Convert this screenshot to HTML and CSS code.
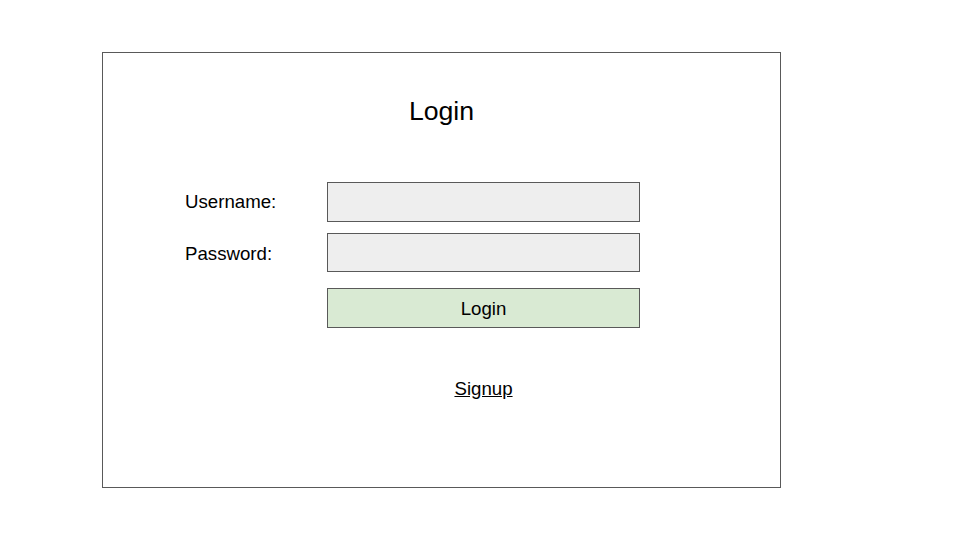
FILE: index.html
```html
<!DOCTYPE html>
<html>
<head>
<meta charset="utf-8">
<link rel="stylesheet" href="styles.css">
</head>
<body>
<div class="card">
  <h1 class="title">Login</h1>
  <form class="form">
    <label class="label" for="u">Username:</label>
    <div class="field" id="u"></div>
    <label class="label label-pw" for="p">Password:</label>
    <div class="field" id="p"></div>
    <div class="spacer"></div>
    <div class="button">Login</div>
    <div class="spacer"></div>
    <div class="signup-wrap"><a class="signup" href="#">Signup</a></div>
  </form>
</div>
</body>
</html>
```
FILE: styles.css
```css
html, body {
  margin: 0;
  padding: 0;
  background: #ffffff;
}
body {
  font-family: "Liberation Sans", Arial, sans-serif;
  color: #000000;
}
.card {
  box-sizing: border-box;
  width: 679px;
  height: 436px;
  margin: 52px 0 0 102px;
  border: 1px solid #595959;
  padding: 43px 0 0 82px;
}
.title {
  margin: 0 0 0 -82px;
  font-size: 26.67px;
  font-weight: normal;
  line-height: 30px;
  height: 30px;
  text-align: center;
}
.form {
  display: grid;
  grid-template-columns: 142px 313px;
  grid-auto-rows: auto;
  row-gap: 11px;
  margin-top: 56px;
  align-items: center;
}
.label {
  font-size: 18.67px;
  line-height: 22px;
}
.label-pw {
  padding-top: 2px;
}
.field {
  box-sizing: border-box;
  height: 40px;
  background: #eeeeee;
  border: 1px solid #595959;
}
#p {
  height: 39px;
}
.button {
  box-sizing: border-box;
  height: 40px;
  margin-top: 5px;
  background: #d9ead3;
  border: 1px solid #595959;
  font-size: 18.67px;
  line-height: 40px;
  text-align: center;
}
.signup-wrap {
  margin-top: 39px;
  text-align: center;
  line-height: 22px;
}
.signup {
  font-size: 18.67px;
  color: #000000;
  text-decoration: underline;
}
```
